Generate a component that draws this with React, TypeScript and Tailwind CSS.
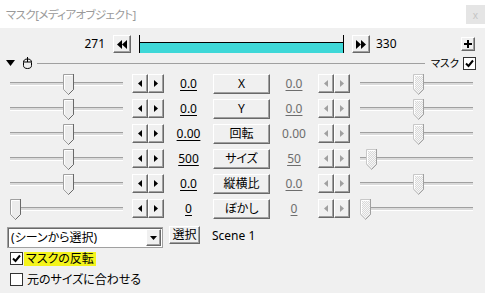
import React from 'react';

// classic raised 3d edge used by all small buttons
const raised =
  'bg-[#f0f0f0] border border-t-white border-l-white border-r-[#696969] border-b-[#696969] shadow-[inset_-1px_-1px_0_#a0a0a0]';

type Row = { l: string; label: string; r: string; lp: number; rp: number; lu: boolean; ru: boolean };

const rows: Row[] = [
  { l: '0.0', label: 'X', r: '0.0', lp: 53, rp: 53, lu: true, ru: true },
  { l: '0.0', label: 'Y', r: '0.0', lp: 53, rp: 53, lu: true, ru: true },
  { l: '0.00', label: '回転', r: '0.00', lp: 53, rp: 53, lu: true, ru: false },
  { l: '500', label: 'サイズ', r: '50', lp: 53, rp: 6, lu: true, ru: true },
  { l: '0.0', label: '縦横比', r: '0.0', lp: 53, rp: 53, lu: true, ru: true },
  { l: '0', label: 'ぼかし', r: '0', lp: 0, rp: 0, lu: true, ru: true },
];

const Thumb = ({ disabled }: { disabled?: boolean }) => (
  <svg width="11" height="22" viewBox="0 0 11 22">
    <defs>
      <pattern id="dots" width="2" height="2" patternUnits="userSpaceOnUse">
        <rect width="2" height="2" fill="#f7f7f7" />
        <rect width="1" height="1" fill="#d9d9d9" />
        <rect x="1" y="1" width="1" height="1" fill="#d9d9d9" />
      </pattern>
    </defs>
    <polygon
      points="0.5,0.5 10.5,0.5 10.5,15.5 5.5,20.5 0.5,15.5"
      fill={disabled ? 'url(#dots)' : '#ececec'}
      stroke={disabled ? '#c8c8c8' : '#a0a0a0'}
    />
    <polyline points="1.5,15 1.5,1.5 9.5,1.5" fill="none" stroke="#fff" />
    <polyline
      points="10.5,0 10.5,15.5 5.5,20.5"
      fill="none"
      stroke={disabled ? '#a0a0a0' : '#696969'}
    />
  </svg>
);

// slider: 25px tall area, thumb sits over the groove
const Slider = ({ pos, disabled }: { pos: number; disabled?: boolean }) => (
  <div className="relative h-[25px] w-[113px] shrink-0">
    <div className="absolute left-0 right-0 top-[11px] h-[4px] border-t border-b border-t-[#a0a0a0] border-b-white bg-[#dadada]" />
    <div className="absolute top-[3px]" style={{ left: pos }}>
      <Thumb disabled={disabled} />
    </div>
  </div>
);

const Arrows = ({ disabled }: { disabled?: boolean }) => {
  const c = disabled ? '#a0a0a0' : '#000';
  return (
    <div className="flex shrink-0">
      <div className={`${raised} flex h-[19px] w-[16px] items-center justify-center`}>
        <svg width="4" height="7">
          <polygon points="4,0 4,7 0,3.5" fill={c} />
        </svg>
      </div>
      <div className={`${raised} flex h-[19px] w-[16px] items-center justify-center`}>
        <svg width="4" height="7">
          <polygon points="0,0 0,7 4,3.5" fill={c} />
        </svg>
      </div>
    </div>
  );
};

const Check = ({ on }: { on?: boolean }) => (
  <div className="flex h-[13px] w-[13px] shrink-0 items-center justify-center border border-[#333] bg-white">
    {on && (
      <svg width="9" height="9" viewBox="0 0 9 9">
        <polyline points="1,4.5 3.5,7 8,1.5" fill="none" stroke="#000" strokeWidth="2" />
      </svg>
    )}
  </div>
);

export default function App() {
  return (
    <div className="flex h-[293px] w-[485px] flex-col overflow-hidden bg-[#f0f0f0] font-['Noto_Sans','Noto_Sans_CJK_JP',sans-serif] text-[12px] leading-none text-black [font-feature-settings:'palt']">
      {/* title bar */}
      <div className="flex h-[28px] shrink-0 items-start justify-between bg-white pl-[6px]">
        <span className="mt-[9px] text-[11.5px] tracking-[-0.6px] text-[#9a9a9a]">マスク[メディアオブジェクト]</span>
        <div className="mt-[5px] flex h-[19px] w-[19px] items-center justify-center bg-[#e5e5e5] text-[10px] text-[#c4c4c4]">
          x
        </div>
      </div>

      {/* timeline */}
      <div className="mt-[7px] flex h-[18px] shrink-0 items-center">
        <span className="w-[105px] text-right">271</span>
        <div className={`${raised} ml-[8px] flex h-[18px] w-[18px] items-center justify-center`}>
          <svg width="10" height="9">
            <polygon points="0,4.5 5,0 5,9" fill="#000" />
            <polygon points="5,4.5 10,0 10,9" fill="#000" />
          </svg>
        </div>
        <div className="ml-[8px] flex h-[18px] w-[205px] flex-col border-x border-black">
          <div className="h-[7px]" />
          <div className="h-px bg-black" />
          <div className="flex-1 bg-[#3ed8d8]" />
        </div>
        <div className={`${raised} ml-[8px] flex h-[18px] w-[18px] items-center justify-center`}>
          <svg width="10" height="9">
            <polygon points="0,0 5,4.5 0,9" fill="#000" />
            <polygon points="5,0 10,4.5 5,9" fill="#000" />
          </svg>
        </div>
        <span className="ml-[6px]">330</span>
        <div className={`${raised} ml-auto mr-[10px] flex h-[14px] w-[14px] items-center justify-center`}>
          <svg width="8" height="8">
            <path d="M4 0v8M0 4h8" stroke="#000" strokeWidth="2" />
          </svg>
        </div>
      </div>

      {/* group header */}
      <div className="flex h-[18px] shrink-0 items-center pt-[2px]">
        <svg className="ml-[6px]" width="9" height="6">
          <polygon points="0,0 9,0 4.5,6" fill="#000" />
        </svg>
        <svg className="ml-[8px]" width="9" height="12" viewBox="0 0 9 12">
          <path d="M4.5 0v5M0.5 5h8M0.5 5.5c0-2.5 1.5-3.5 4-3.5s4 1 4 3.5v3c0 2-1.5 3-4 3s-4-1-4-3z" fill="none" stroke="#000" />
        </svg>
        <div className="ml-[5px] h-px flex-1 bg-[#a0a0a0]" />
        <span className="ml-[6px] text-[10.5px]">マスク</span>
        <div className="ml-[4px] mr-[9px]">
          <Check on />
        </div>
      </div>

      {/* parameter rows */}
      {rows.map((r) => (
        <div key={r.label} className="flex h-[25px] shrink-0 items-center pl-[10px]">
          <Slider pos={r.lp} />
          <div className="ml-[9px]">
            <Arrows />
          </div>
          <span className={`w-[49px] shrink-0 text-center ${r.lu ? 'underline underline-offset-2' : ''}`}>{r.l}</span>
          <div className={`${raised} flex h-[20px] w-[57px] shrink-0 items-center justify-center`}>{r.label}</div>
          <span
            className={`w-[48px] shrink-0 text-center text-[#6d6d6d] ${r.ru ? 'underline underline-offset-2' : ''}`}
          >
            {r.r}
          </span>
          <Arrows disabled />
          <div className="ml-[10px]">
            <Slider pos={r.rp} disabled />
          </div>
        </div>
      ))}

      {/* scene select */}
      <div className="mt-[5px] flex h-[22px] shrink-0 items-start">
        <div className="ml-[7px] mt-[1px] flex h-[21px] w-[156px] items-center border border-[#a0a0a0] bg-white shadow-[inset_1px_1px_0_#696969]">
          <span className="flex-1 pl-[3px]">(シーンから選択)</span>
          <div className={`${raised} mr-px flex h-[17px] w-[15px] items-center justify-center`}>
            <svg width="7" height="4">
              <polygon points="0,0 7,0 3.5,4" fill="#000" />
            </svg>
          </div>
        </div>
        <div className={`${raised} ml-[6px] flex h-[18px] w-[31px] items-center justify-center`}>選択</div>
        <span className="ml-[12px] mt-[4px]">Scene 1</span>
      </div>

      {/* options */}
      <div className="mt-[3px] flex h-[15px] shrink-0 items-center pl-[10px]">
        <Check on />
        <span className="ml-[1px] bg-[#f4f41c] px-[2px] py-[1px]">マスクの反転</span>
      </div>
      <div className="mt-[6px] flex h-[15px] shrink-0 items-center pl-[10px]">
        <Check />
        <span className="ml-[4px]">元のサイズに合わせる</span>
      </div>
    </div>
  );
}
